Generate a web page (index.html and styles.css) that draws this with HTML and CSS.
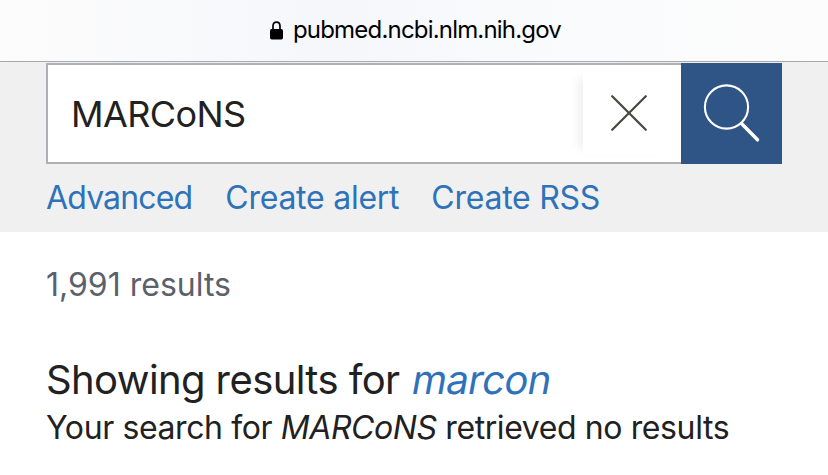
FILE: index.html
```html
<!DOCTYPE html>
<html lang="en">

<head>
  <meta charset="UTF-8">
  <title>MARCoNS - Search Results - PubMed</title>
  <link rel="stylesheet" href="styles.css">
</head>

<body>
  <div class="address-bar">
    <svg class="lock" width="13" height="19" viewBox="0 0 13 19">
      <path d="M3 9V5.2C3 2.9 4.3 1.2 6.5 1.2S10 2.9 10 5.2V9" fill="none" stroke="#000" stroke-width="1.7" />
      <rect x="0" y="8" width="13" height="10.5" rx="1.7" />
    </svg>
    <span class="url">pubmed.ncbi.nlm.nih.gov</span>
  </div>

  <header class="search-header">
    <form class="search-form">
      <div class="search-box">
        <span class="search-term">MARCoNS</span>
        <button type="button" class="clear-btn" aria-label="Clear search">
          <svg width="36" height="36" viewBox="0 0 36 36">
            <path d="M1.2 1.2L34.8 34.8M34.8 1.2L1.2 34.8" />
          </svg>
        </button>
      </div>
      <button type="button" class="search-btn" aria-label="Search">
        <svg width="101" height="101" viewBox="0 0 101 101">
          <circle cx="45.5" cy="44" r="21.6" stroke-width="2.1" />
          <path d="M60.5 60.5L76.5 76.8" stroke-width="3.5" stroke-linecap="round" />
        </svg>
      </button>
    </form>
    <nav class="search-links">
      <a class="advanced">Advanced</a>
      <a class="alert">Create alert</a>
      <a class="rss">Create RSS</a>
    </nav>
  </header>

  <main class="results">
    <div class="results-amount">1,991 results</div>
    <h1><span class="showing">Showing results for</span> <em>marcon</em></h1>
    <p>Your search for <em>MARCoNS</em> retrieved no results</p>
  </main>
</body>

</html>
```
FILE: styles.css
```css
body {
  margin: 0;
  font-family: Inter, "Liberation Sans", sans-serif;
  font-size: 32px;
  color: #212121;
  background: #fff;
}

.address-bar {
  display: flex;
  align-items: center;
  justify-content: center;
  gap: 10px;
  box-sizing: border-box;
  height: 62px;
  padding: 0 0 1px 3px;
  border-bottom: 1px solid #a7a9ac;
  background: linear-gradient(90deg, #fcfcfc, #f6f7fb 40%, #fafbfc 70%, #fcfcfc);
}

.lock {
  display: block;
}

.url {
  font-size: 24px;
  line-height: 58px;
  letter-spacing: -0.81px;
  color: #000;
}

.search-header {
  box-sizing: border-box;
  height: 170px;
  padding: 1px 46px 0;
  background: #f0f0f0;
}

.search-form {
  display: flex;
  height: 101px;
}

.search-box {
  flex: 1;
  display: flex;
  align-items: center;
  justify-content: space-between;
  border: 2px solid #aeb0b5;
  border-right: 0;
  padding-left: 23px;
  background: #fff;
}

.search-term {
  font-size: 36px;
  line-height: 98px;
  letter-spacing: -0.6px;
}

button {
  display: flex;
  align-items: center;
  justify-content: center;
  padding: 0;
  border: 0;
}

.clear-btn {
  width: 98px;
  height: 83px;
  padding: 0 6px 2px 0;
  background: #fff;
  box-shadow: -10px 0 10px -6px rgba(0, 0, 0, 0.07);
}

.clear-btn svg {
  stroke: #494744;
  stroke-width: 2.2;
  stroke-linecap: round;
}

.search-btn {
  width: 101px;
  background: #2f5586;
}

.search-btn svg {
  fill: none;
  stroke: #fff;
}

.search-links {
  display: flex;
  gap: 33px;
  padding-top: 13px;
  line-height: 42px;
  color: #2e72b9;
  white-space: nowrap;
}

.advanced {
  letter-spacing: -0.85px;
}

.alert {
  letter-spacing: -0.25px;
}

.rss {
  margin-left: -1px;
  letter-spacing: -0.25px;
}

.results {
  padding: 33px 46px 0;
  white-space: nowrap;
}

.results-amount {
  line-height: 40px;
  color: #5b616b;
}

h1 {
  margin: 51px 0 0;
  font-size: 40px;
  font-weight: 400;
  line-height: 48px;
  letter-spacing: -0.6px;
}

/* slant the upright letters, the italic face has a different "a" */
h1 em {
  display: inline-block;
  font-style: normal;
  transform: skewX(-10deg);
  transform-origin: 0 80%;
  color: #2e72b9;
}

p {
  margin: 2px 0 0;
  line-height: 44px;
  letter-spacing: -0.4px;
}
```
